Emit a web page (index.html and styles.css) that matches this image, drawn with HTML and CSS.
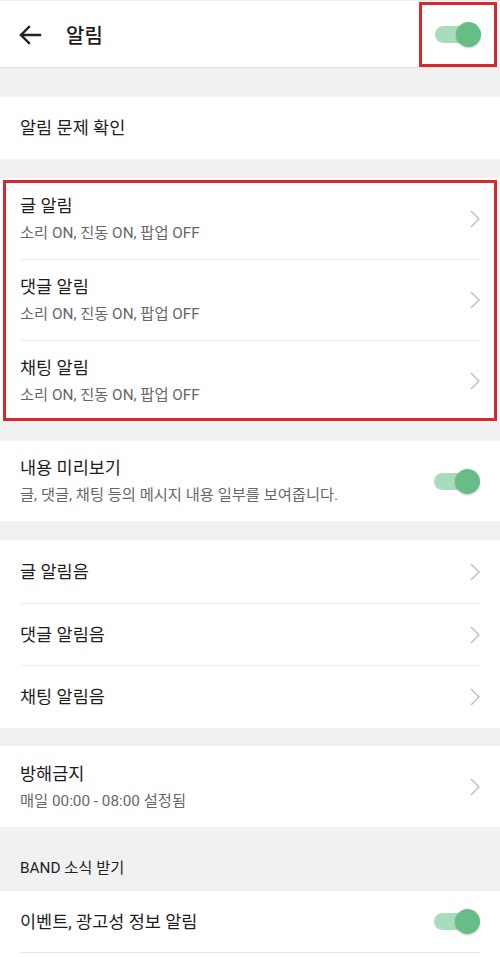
FILE: index.html
```html
<!DOCTYPE html>
<html lang="ko">
<head>
<meta charset="utf-8">
<link rel="stylesheet" href="styles.css">
</head>
<body>
<div class="header">
  <svg class="back" width="24" height="20" viewBox="0 0 24 20"><path d="M22 10H3M11 2L3 10l8 8" fill="none" stroke="#222" stroke-width="2.4" stroke-linecap="square"/></svg>
  <div class="title">알림</div>
  <div class="toggle"><span class="track"></span><span class="knob"></span></div>
  <div class="mark mark-head"></div>
</div>

<div class="gap g29"></div>
<div class="section">
  <div class="row h62"><div class="inner"><div class="txt"><div class="t">알림 문제 확인</div></div></div></div>
</div>

<div class="gap g19"></div>
<div class="section">
  <div class="row h81"><div class="inner"><div class="txt"><div class="t">글 알림</div><div class="s">소리 ON, 진동 ON, 팝업 OFF</div></div><svg class="chev" width="10" height="18" viewBox="0 0 10 18"><path d="M1 1l8 8-8 8" fill="none" stroke="#bdbdbd" stroke-width="1.4"/></svg></div></div>
  <div class="row h81"><div class="inner line"><div class="txt"><div class="t">댓글 알림</div><div class="s">소리 ON, 진동 ON, 팝업 OFF</div></div><svg class="chev" width="10" height="18" viewBox="0 0 10 18"><path d="M1 1l8 8-8 8" fill="none" stroke="#bdbdbd" stroke-width="1.4"/></svg></div></div>
  <div class="row h81"><div class="inner line"><div class="txt"><div class="t">채팅 알림</div><div class="s">소리 ON, 진동 ON, 팝업 OFF</div></div><svg class="chev" width="10" height="18" viewBox="0 0 10 18"><path d="M1 1l8 8-8 8" fill="none" stroke="#bdbdbd" stroke-width="1.4"/></svg></div></div>
  <div class="mark mark-sec"></div>
</div>

<div class="gap g20"></div>
<div class="section">
  <div class="row h80"><div class="inner"><div class="txt"><div class="t">내용 미리보기</div><div class="s">글, 댓글, 채팅 등의 메시지 내용 일부를 보여줍니다.</div></div><div class="toggle"><span class="track"></span><span class="knob"></span></div></div></div>
</div>

<div class="gap g19"></div>
<div class="section">
  <div class="row h63"><div class="inner"><div class="txt"><div class="t">글 알림음</div></div><svg class="chev" width="10" height="18" viewBox="0 0 10 18"><path d="M1 1l8 8-8 8" fill="none" stroke="#bdbdbd" stroke-width="1.4"/></svg></div></div>
  <div class="row h62"><div class="inner line"><div class="txt"><div class="t">댓글 알림음</div></div><svg class="chev" width="10" height="18" viewBox="0 0 10 18"><path d="M1 1l8 8-8 8" fill="none" stroke="#bdbdbd" stroke-width="1.4"/></svg></div></div>
  <div class="row h63"><div class="inner line"><div class="txt"><div class="t">채팅 알림음</div></div><svg class="chev" width="10" height="18" viewBox="0 0 10 18"><path d="M1 1l8 8-8 8" fill="none" stroke="#bdbdbd" stroke-width="1.4"/></svg></div></div>
</div>

<div class="gap g18"></div>
<div class="section">
  <div class="row h81"><div class="inner"><div class="txt"><div class="t">방해금지</div><div class="s">매일 00:00 - 08:00 설정됨</div></div><svg class="chev" width="10" height="18" viewBox="0 0 10 18"><path d="M1 1l8 8-8 8" fill="none" stroke="#bdbdbd" stroke-width="1.4"/></svg></div></div>
</div>

<div class="label">BAND 소식 받기</div>
<div class="section tail">
  <div class="row h62"><div class="inner bottom"><div class="txt"><div class="t">이벤트, 광고성 정보 알림</div></div><div class="toggle"><span class="track"></span><span class="knob"></span></div></div></div>
</div>
</body>
</html>
```

FILE: styles.css
```css
html, body {
  margin: 0;
  padding: 0;
}
body {
  width: 500px;
  height: 957px;
  overflow: hidden;
  background: #f1f1f1;
  font-family: Roboto, "Noto Sans CJK KR", sans-serif;
  color: #222;
}
.header {
  position: relative;
  background: #fff;
  border-top: 1px solid #ececec;
  border-bottom: 1px solid #e2e2e2;
  box-sizing: border-box;
  height: 68px;
  display: flex;
  align-items: center;
  padding: 0 19px 0 18px;
}
.back {
  flex: none;
  margin-top: 1px;
}
.title {
  flex: 1;
  margin-left: 24px;
  font-size: 20px;
  font-weight: 500;
  color: #1c1c1c;
  margin-top: 1px;
}
.toggle {
  position: relative;
  flex: none;
  width: 46px;
  height: 25px;
}
.track {
  position: absolute;
  left: 0;
  top: 4px;
  width: 36px;
  height: 17px;
  border-radius: 9px;
  background: #a9dcbd;
}
.knob {
  position: absolute;
  right: 0;
  top: 0;
  width: 25px;
  height: 25px;
  border-radius: 50%;
  background: #66bd86;
  box-shadow: 0 1px 2px rgba(0, 0, 0, 0.22);
}
.mark {
  position: absolute;
  border: 3px solid #d7282f;
  box-sizing: border-box;
  pointer-events: none;
}
.mark-head {
  left: 419px;
  top: 1px;
  width: 78px;
  height: 65px;
}
.g29 { height: 29px; }
.g19 { height: 19px; }
.g20 { height: 20px; }
.g18 { height: 18px; }
.section {
  background: #fff;
  position: relative;
}
.mark-sec {
  left: 3px;
  top: 2px;
  width: 494px;
  height: 241px;
}
.row {
  box-sizing: border-box;
}
.h62 { height: 62px; }
.h63 { height: 63px; }
.h80 { height: 80px; }
.h81 { height: 81px; }
.inner {
  margin: 0 20px;
  height: 100%;
  box-sizing: border-box;
  display: flex;
  align-items: center;
}
.inner.line {
  border-top: 1px solid #ececec;
}
.inner.bottom {
  border-bottom: 1px solid #e6e6e6;
}
.txt {
  flex: 1;
  min-width: 0;
}
.t {
  font-size: 17.5px;
  line-height: 22px;
  color: #1e1e1e;
}
.s {
  font-size: 15.3px;
  line-height: 20px;
  margin-top: 6px;
  color: #676767;
}
.chev {
  flex: none;
}
.label {
  height: 64px;
  box-sizing: border-box;
  padding: 31px 20px 0;
  font-size: 15.3px;
  line-height: 20px;
  color: #222;
}
.tail {
  height: 66px;
}
```
